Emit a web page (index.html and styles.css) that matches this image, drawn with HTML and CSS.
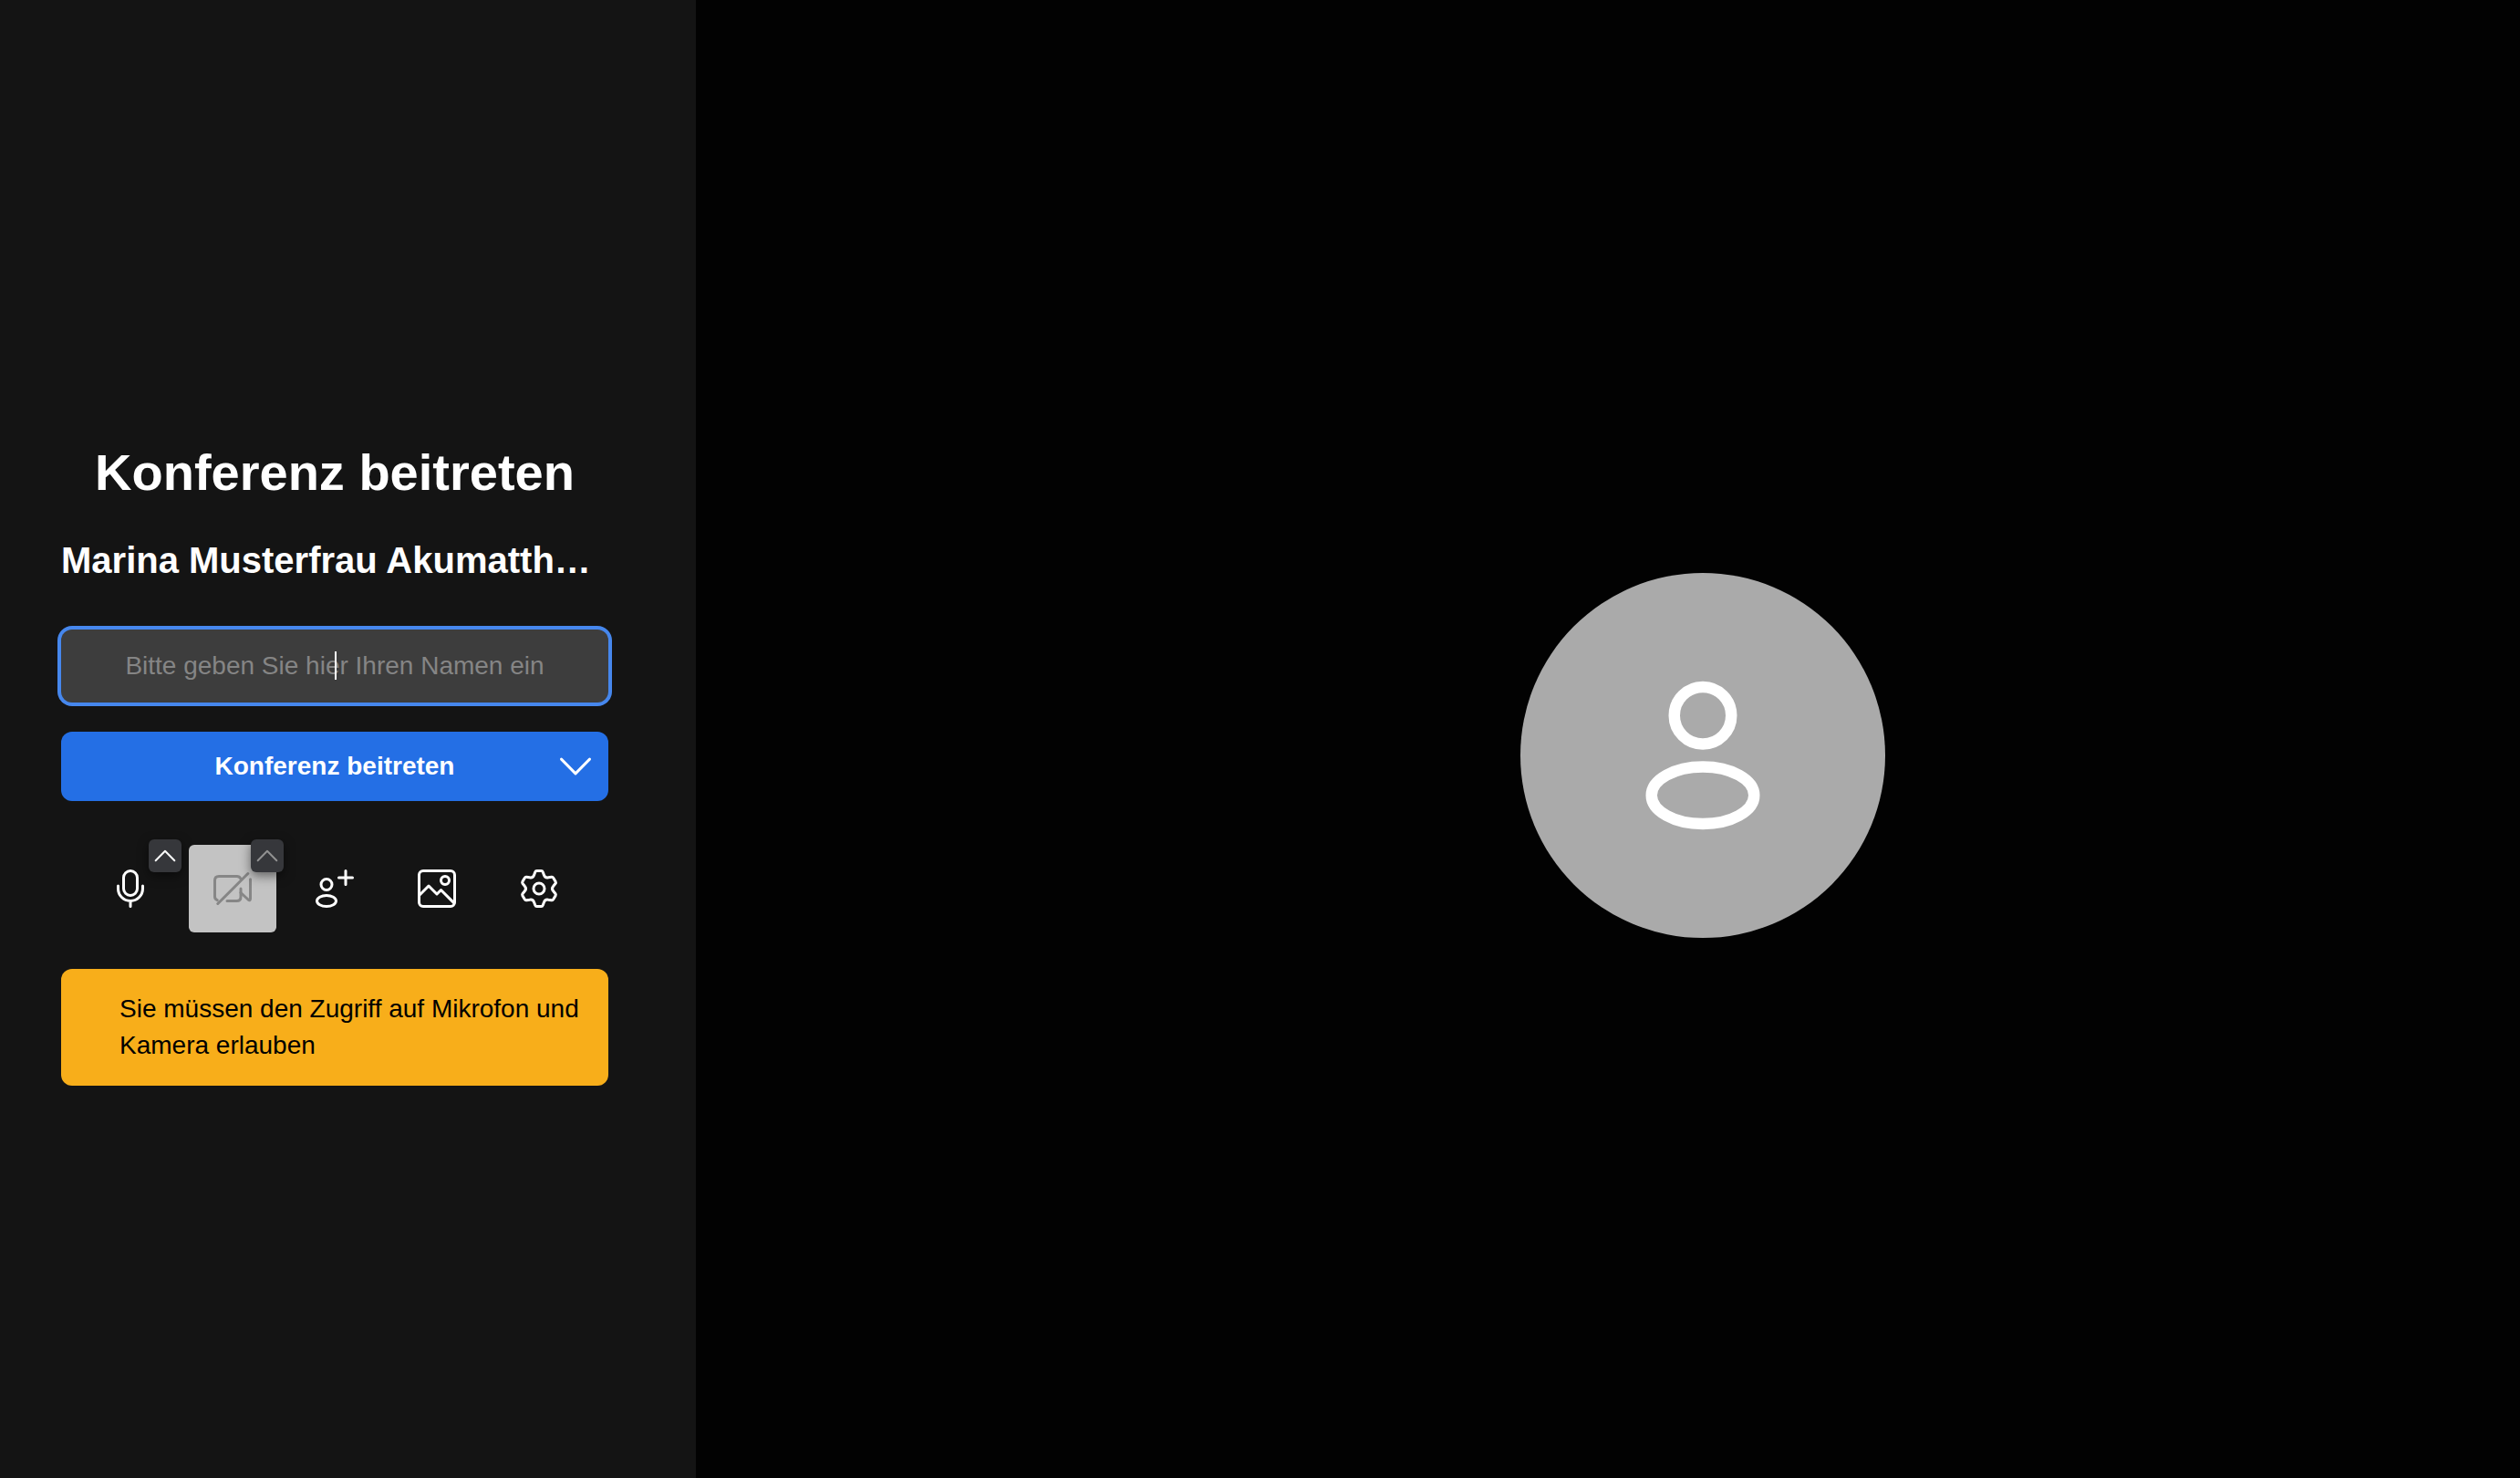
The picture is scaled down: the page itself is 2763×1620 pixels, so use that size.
FILE: index.html
```html
<!DOCTYPE html>
<html lang="de">
<head>
    <meta charset="UTF-8">
    <meta name="viewport" content="width=device-width, initial-scale=1.0">
    <title>Konferenz beitreten</title>
    <link rel="stylesheet" href="styles.css">
</head>
<body>
    <div class="prejoin">
        <section class="panel">
            <h1 class="title">Konferenz beitreten</h1>
            <h2 class="room">Marina Musterfrau Akumatth…</h2>
            <form class="join-form">
                <div class="name-field">
                    <input class="name" type="text" placeholder="Bitte geben Sie hier Ihren Namen ein" aria-label="Bitte geben Sie hier Ihren Namen ein">
                    <span class="caret"></span>
                </div>
                <div class="join">
                    <button type="submit" class="join-btn">Konferenz beitreten</button>
                    <button type="button" class="join-more">
                        <svg class="arrow" viewBox="0 0 16 16"><path d="M1.1 4.5 8 11.5 14.9 4.5"/></svg>
                    </button>
                </div>
            </form>
            <div class="toolbar">
                <div class="tool">
                    <button type="button" class="tool-btn">
                        <svg class="icon" viewBox="0 0 16 16">
                            <rect x="5.5" y="1.5" width="5" height="9" rx="2.5"/>
                            <path d="M3.5 7v1a4.5 4.5 0 0 0 9 0V7M8 12.5v2"/>
                        </svg>
                    </button>
                    <button type="button" class="tool-more">
                        <svg class="arrow" viewBox="0 0 16 16"><path d="M1.1 11.5 8 4.5 14.9 11.5"/></svg>
                    </button>
                </div>
                <div class="tool off">
                    <button type="button" class="tool-btn" disabled>
                        <svg class="icon" viewBox="0 0 16 16">
                            <path d="M2.4 12.2Q1.5 11.8 1.5 11V5Q1.5 3.5 3 3.5H9.6Q10.5 3.5 10.9 4.3M6 12.5H9.5Q11 12.5 11 11V8"/>
                            <path d="M11 9.5 13.7 12Q14.5 12.6 14.5 11.6V4.6M13.6 2.5 2.6 13.5"/>
                        </svg>
                    </button>
                    <button type="button" class="tool-more" disabled>
                        <svg class="arrow" viewBox="0 0 16 16"><path d="M1.1 11.5 8 4.5 14.9 11.5"/></svg>
                    </button>
                </div>
                <div class="tool">
                    <button type="button" class="tool-btn">
                        <svg class="icon" viewBox="0 0 16 16">
                            <circle cx="5" cy="6.5" r="2"/>
                            <ellipse cx="5" cy="12.5" rx="3.5" ry="2"/>
                            <path d="M9.5 4h5M12 1.5v5"/>
                        </svg>
                    </button>
                </div>
                <div class="tool">
                    <button type="button" class="tool-btn">
                        <svg class="icon" viewBox="0 0 16 16">
                            <rect x="1.5" y="1.5" width="13" height="13" rx="1.5"/>
                            <circle cx="11" cy="5" r="1.5"/>
                            <path d="M1.6 10.4 5 7 8 10 9.5 8.5 14.3 13.3"/>
                        </svg>
                    </button>
                </div>
                <div class="tool">
                    <button type="button" class="tool-btn">
                        <svg class="icon" viewBox="-8 -8 16 16">
                            <circle cx="0" cy="0" r="2"/>
                            <path d="M-.8-6.5H.8Q1.25-6.5 1.4-6.1L1.8-5Q2.2-3.81 3.43-4.06L4.58-4.26Q5-4.33 5.23-3.94L6.03-2.56Q6.25-2.17 5.98-1.84L5.23-.94Q4.4 0 5.23.94L5.98 1.84Q6.25 2.17 6.03 2.56L5.23 3.94Q5 4.33 4.58 4.26L3.43 4.06Q2.2 3.81 1.8 5L1.4 6.1Q1.25 6.5.8 6.5H-.8Q-1.25 6.5-1.4 6.1L-1.8 5Q-2.2 3.81-3.43 4.06L-4.58 4.26Q-5 4.33-5.23 3.94L-6.03 2.56Q-6.25 2.17-5.98 1.84L-5.23.94Q-4.4 0-5.23-.94L-5.98-1.84Q-6.25-2.17-6.03-2.56L-5.23-3.94Q-5-4.33-4.58-4.26L-3.43-4.06Q-2.2-3.81-1.8-5L-1.4-6.1Q-1.25-6.5-.8-6.5Z"/>
                        </svg>
                    </button>
                </div>
            </div>
            <p class="warning">Sie müssen den Zugriff auf Mikrofon und Kamera erlauben</p>
        </section>
        <main class="preview">
            <div class="avatar">
                <svg viewBox="0 0 16 16">
                    <circle cx="8" cy="4.5" r="2.5"/>
                    <ellipse cx="8" cy="11.5" rx="4.5" ry="2.5"/>
                </svg>
            </div>
        </main>
    </div>
</body>
</html>
```
FILE: styles.css
```css
*{
    margin: 0;
    padding: 0;
    box-sizing: border-box;
    font-family: "Liberation Sans", Arial, sans-serif;
}
body{
    background-color: #020202;
    color: white;
}
button{
    border: none;
    background: none;
    color: inherit;
}
svg{
    display: block;
    fill: none;
    stroke: currentColor;
    stroke-linecap: round;
    stroke-linejoin: round;
}
.prejoin{
    display: flex;
    min-height: 100vh;
}

/* left side */
.panel{
    flex: 0 0 763px;
    display: flex;
    flex-direction: column;
    justify-content: center;
    padding: 52px 96px 0 67px;
    background-color: #141414;
}
.title{
    font-size: 56px;
    line-height: 72px;
    text-align: center;
}
.room{
    margin-top: 32px;
    font-size: 40px;
    line-height: 56px;
    white-space: nowrap;
    overflow: hidden;
    text-overflow: ellipsis;
}
.join-form{
    display: flex;
    flex-direction: column;
    gap: 32px;
    margin-top: 48px;
}
.name-field,
.join,
.tool{
    position: relative;
}
.name{
    display: block;
    width: 100%;
    height: 80px;
    border: none;
    border-radius: 12px;
    outline: none;
    box-shadow: 0 0 0 4px #4687ed;
    background-color: #3d3d3d;
    color: white;
    font-size: 28px;
    text-align: center;
}
.name::placeholder{
    color: #858585;
    opacity: 1;
}
.caret{
    position: absolute;
    top: 24px;
    left: 50%;
    width: 2px;
    height: 31px;
    background-color: white;
}
.join-btn{
    display: block;
    width: 100%;
    height: 76px;
    border-radius: 12px;
    background-color: #246fe5;
    font-size: 28px;
    font-weight: bold;
}
.join-more{
    position: absolute;
    top: 0;
    right: 0;
    width: 72px;
    height: 76px;
    padding: 0 18px;
}
.arrow{
    width: 100%;
    stroke-width: 1.3;
}

/* device buttons */
.toolbar{
    display: flex;
    justify-content: center;
    gap: 16px;
    margin-top: 48px;
}
.tool-btn{
    display: block;
    width: 96px;
    height: 96px;
    padding: 24px;
    border-radius: 6px;
}
.icon{
    width: 48px;
    height: 48px;
}
.tool-more{
    position: absolute;
    top: -6px;
    right: -8px;
    width: 36px;
    height: 36px;
    padding: 6px;
    border-radius: 6px;
    background-color: #36373b;
    box-shadow: 0 4px 12px rgba(0,0,0,0.5);
}
.off .tool-btn{
    background-color: #c3c3c3;
    color: #868686;
}
.off .tool-more{
    color: #929292;
}
.warning{
    margin-top: 40px;
    padding: 24px 24px 24px 64px;
    border-radius: 12px;
    background-color: #f8ae1a;
    color: black;
    font-size: 28px;
    line-height: 40px;
}

/* video preview */
.preview{
    flex: 1;
    display: flex;
    align-items: center;
    justify-content: center;
    padding: 36px 0 0 208px;
}
.avatar{
    width: 400px;
    height: 400px;
    padding: 100px;
    border-radius: 50%;
    background-color: #aaaaaa;
}
```
